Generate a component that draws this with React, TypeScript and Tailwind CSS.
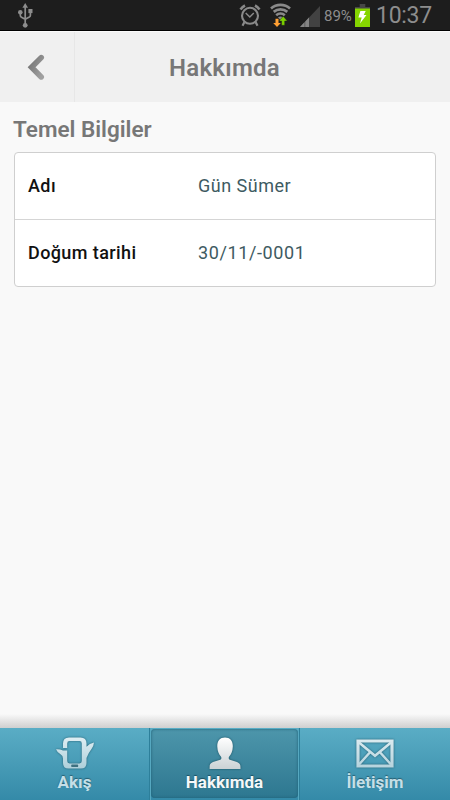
import React from 'react';

const AlarmIcon = () => (
  <svg width="22" height="24" viewBox="0 0 22 24" fill="none" stroke="#8a8a8a">
    <circle cx="11" cy="12.8" r="8" strokeWidth="2.1" />
    <path d="M6.7 10l4.100 4 4-4" strokeWidth="1.500" />
    <path d="M1.500 6.500A12 12 0 0 1 6 2.500M16 2.500a12 12 0 0 1 4.500 4" strokeWidth="2.600" />
    <path d="M5.300 19.200l-1.800 3.500M16.700 19.200l1.800 3.500" strokeWidth="2.200" />
  </svg>
);

const WifiIcon = () => (
  <svg width="22" height="24" viewBox="0 0 22 24" fill="none">
    <g stroke="#8a8a8a" strokeWidth="2.7">
      <path d="M1 5.500a14.500 14.500 0 0 1 19 0" />
      <path d="M3.700 8.900a10.500 10.500 0 0 1 13.600 0" />
      <path d="M6.200 12.200a6.800 6.800 0 0 1 8.600 0" />
    </g>
    <path d="M8 14.200q2.500-1.500 5 0l-2.500 3z" fill="#8a8a8a" />
    <path d="M5.500 15.700h3v4.300h2.300L7 24l-3.800-4h2.300z" fill="#ffa033" />
    <path d="M11.600 22.300h3.100v-4.300h2.600l-4.100-4.800L9.100 18h2.500z" fill="#7bd000" stroke="#1d1d1d" strokeWidth=".4" />
  </svg>
);

const SignalIcon = () => (
  <svg width="20" height="21" viewBox="0 0 20 21">
    <path d="M0 21L20 0v21z" fill="#424242" />
    <path d="M0 21l4.600-4.900V21z" fill="#858585" />
    <path d="M5.200 15.500v5.500H9v-9.500z" fill="#858585" />
  </svg>
);

const BatteryIcon = () => (
  <svg width="15" height="23" viewBox="0 0 15 23">
    <path d="M4.700 0h5.600v3H15v20H0V3h4.700z" fill="#464646" />
    <path d="M0 4.500h15V23H0z" fill="#86d500" />
    <path d="M5.400 7h5.300L8.700 11h2.800L5 19.500l1.700-6.100H3.400z" fill="#fff" />
  </svg>
);

const UsbIcon = () => (
  <svg width="16" height="25" viewBox="0 0 16 25" fill="none">
    <path d="M7.200 4v17M2.300 9.500v2.800q0 1.400 1.200 2L7.200 16.300M12.400 9v3.200q0 1.300-1.100 1.900l-4.100 2.100" stroke="#8d8d8d" strokeWidth="1.700" />
    <path d="M7.200 0L10 4.700H4.400z" fill="#8d8d8d" />
    <circle cx="7.200" cy="22.300" r="2.400" fill="#8d8d8d" />
    <circle cx="2.300" cy="9.200" r="2.300" fill="#8d8d8d" />
    <path d="M10.400 6h4.100v4.100h-4.100z" fill="#8d8d8d" />
  </svg>
);

const StreamIcon = () => (
  <svg width="38" height="33" viewBox="0 0 38 33" className="drop-shadow-[0_0_1px_#255f72]">
    <defs>
      <linearGradient id="stream" x1="0" y1="0" x2="0" y2="1">
        <stop offset="0" stopColor="#dfeef3" />
        <stop offset="1" stopColor="#aecfda" />
      </linearGradient>
    </defs>
    <path
      d="M7 11V6.500Q7 .5 13 .5h11.500q6 0 6 6v3.200q3-3.300 7.500-4.100-.3 3.200-2.200 6-3.300 4.300-5.300 9.400v5q0 5.500-5.500 5.500H12.500Q7 31.500 7 26v-4.500q-.4-3.300-3.400-5Q1.200 15 0 12.200q3.800-.3 7 1.300h4.200V24q0 2.400 2.400 2.400h9.800q2.400 0 2.400-2.400V6.400Q25.800 4 23.400 4h-9.800q-2.400 0-2.400 2.400V11z"
      fill="url(#stream)"
      fillRule="evenodd"
    />
    <rect x="15.300" y="27.600" width="6.800" height="2.500" rx=".6" fill="#3e7180" />
  </svg>
);

const PersonIcon = () => (
  <svg width="32" height="33" viewBox="0 0 32 33" className="drop-shadow-[0_0_1px_#194f60]">
    <defs>
      <linearGradient id="person" x1="0" y1="0" x2="0" y2="1">
        <stop offset="0" stopColor="#fff" />
        <stop offset="1" stopColor="#cbd2d5" />
      </linearGradient>
    </defs>
    <path
      d="M16 .5c-5.200 0-8 3.800-7.700 9.200.2 4.600 1.600 7.500 3.600 9.800.8 1 .7 2.700-.7 3.300L4 25.100C1.300 26.200.6 27.500.6 30v2h30.900v-2c0-2.500-.8-3.800-3.500-4.900l-7.100-2.300c-1.400-.6-1.500-2.300-.7-3.300 2-2.300 3.400-5.200 3.600-9.800C24.100 4.300 21.200.5 16 .5z"
      fill="url(#person)"
    />
  </svg>
);

const MailIcon = () => (
  <svg width="38" height="29" viewBox="0 0 38 29" fill="none" className="drop-shadow-[0_0_1px_#255f72]">
    <defs>
      <linearGradient id="mail" gradientUnits="userSpaceOnUse" x1="0" y1="0" x2="0" y2="29">
        <stop offset="0" stopColor="#dcebf0" />
        <stop offset="1" stopColor="#b5d3dd" />
      </linearGradient>
    </defs>
    <g stroke="url(#mail)">
      <path d="M2 2h34v25H2z" strokeWidth="3.200" />
      <path d="M3 3.500l16 13.300L35 3.500M3 25.500l10.800-12M35 25.500l-10.800-12" strokeWidth="2.600" />
    </g>
  </svg>
);

const rows = [
  { label: 'Adı', value: 'Gün Sümer', spacing: 'tracking-[0.5px]' },
  { label: 'Doğum tarihi', value: '30/11/-0001', spacing: 'tracking-[0.6px]' },
];

const StatusBar = () => (
  <div className="flex h-[31px] items-start border-b border-black bg-[#1d1d1d] text-[#8d8d8d]">
    <div className="mt-[3px] ml-[18px]">
      <UsbIcon />
    </div>
    <div className="mt-[3px] ml-[205px]">
      <AlarmIcon />
    </div>
    <div className="mt-[3px] ml-[9px]">
      <WifiIcon />
    </div>
    <div className="mt-[6px] ml-[8px]">
      <SignalIcon />
    </div>
    <span className="mt-[6px] ml-[4px] w-[31px] text-[15px] leading-5 whitespace-nowrap">89%</span>
    <div className="mt-[4px]">
      <BatteryIcon />
    </div>
    <span className="mt-[1px] ml-[6px] text-[23px] leading-[30px] tracking-[-0.3px] whitespace-nowrap">10:37</span>
  </div>
);

const Header = () => (
  <header className="flex h-[71px] border-t border-[#fafafa] bg-[#f0f0f0]">
    <button className="flex w-[75px] items-center border-r border-[#e7e7e7] pl-[27px]" aria-label="Geri">
      <svg width="18" height="27" viewBox="0 0 18 27" fill="none">
        <defs>
          <linearGradient id="back" x1="0" y1="0" x2="1" y2="1">
            <stop offset="0" stopColor="#777" />
            <stop offset="1" stopColor="#a0a0a0" />
          </linearGradient>
        </defs>
        <path
          d="M14.200 3.600L4.600 13.300l9.600 9.600"
          stroke="url(#back)"
          strokeWidth="5.600"
          strokeLinejoin="miter"
          strokeLinecap="round"
        />
      </svg>
    </button>
    <h1 className="flex-1 pt-[20px] pl-[94px] text-2xl leading-8 font-semibold tracking-[0.25px] text-[#777]">Hakkımda</h1>
  </header>
);

const TabBar = () => (
  <nav className="grid h-[72px] grid-cols-[150px_149px_151px] bg-linear-to-b from-[#5aadc5] to-[#348aa8] text-[17px] leading-6 font-bold text-[#c5dfe7]">
    <button className="flex flex-col items-center border-r border-[#2d7f9a] pt-[9px] text-shadow-[0_-1px_1px_#285f72]">
      <StreamIcon />
      <span>Akış</span>
    </button>
    <div className="border-x border-[#56a8c0] pt-[1px] pb-[2px]">
      <button className="flex h-full w-full flex-col items-center rounded-sm bg-linear-to-b from-[#4d96ab] to-[#2d7790] pt-[8px] text-[#f5f8f9] shadow-[inset_0_0_3px_#1d5f76] text-shadow-[0_-1px_1px_#194f60]">
        <PersonIcon />
        <span>Hakkımda</span>
      </button>
    </div>
    <button className="flex flex-col items-center border-l border-[#2d7f9a] pt-[11px] text-shadow-[0_-1px_1px_#285f72]">
      <MailIcon />
      <span className="mt-[2px]">İletişim</span>
    </button>
  </nav>
);

const App = () => (
  <div className="flex h-[800px] w-[450px] flex-col overflow-hidden bg-[#f9f9f9] font-['Roboto',sans-serif]">
    <StatusBar />
    <Header />
    <main className="flex-1 px-[14px] pt-[12px]">
      <h2 className="-ml-px mb-[8px] text-[22.5px] leading-[30px] font-semibold text-[#777]">Temel Bilgiler</h2>
      <div className="h-[135px] rounded border border-[#cfcfcf] bg-white">
        {rows.map((row, i) => (
          <div key={row.label} className={`flex items-center pl-[13px] text-lg ${i > 0 ? 'h-[67px] border-t border-[#d5d5d5]' : 'h-[66px]'}`}>
            <span className="w-[170px] font-medium tracking-[0.4px] text-[#111]">{row.label}</span>
            <span className={`text-[#3e5a61] ${row.spacing}`}>{row.value}</span>
          </div>
        ))}
      </div>
    </main>
    <div className="h-[14px] bg-linear-to-b from-[#f9f9f9] to-[#cfcfcf]" />
    <TabBar />
  </div>
);

export default App;
